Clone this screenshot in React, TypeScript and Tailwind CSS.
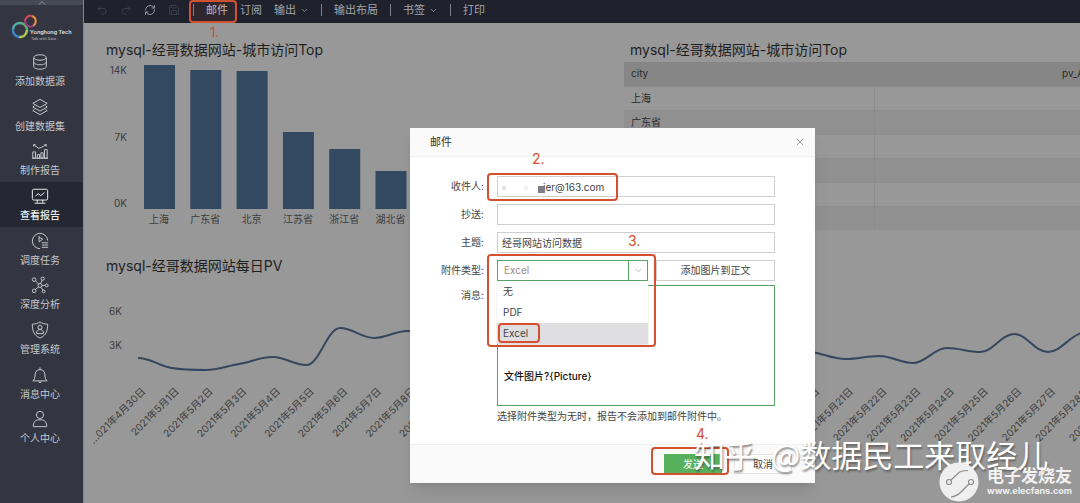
import React from 'react';
import { ChevronDown, ChevronUp, Redo2, RefreshCw, Save, Undo2, X } from 'lucide-react';

interface NavItem {
  label: string;
  icon: React.ReactNode;
  active?: boolean;
}

const navItems: NavItem[] = [
  {
    label: '添加数据源',
    icon: (
      <>
        <ellipse cx="10" cy="5" rx="7" ry="3" />
        <path d="M3 5v10c0 1.7 3.1 3 7 3s7-1.3 7-3V5M3 10c0 1.7 3.1 3 7 3s7-1.3 7-3" />
      </>
    ),
  },
  {
    label: '创建数据集',
    icon: <path d="M10 1.500l8 4.500-8 4.500L2 6zM2 10l8 4.500 8-4.500M2 14l8 4.500 8-4.500M4 8.500L2 10M16 8.500l2 1.500M4 12.500L2 14M16 12.500l2 1.500" />,
  },
  {
    label: '制作报告',
    icon: <path d="M2 18v-7h3v7zM7 18v-4h2.500v4zM11 18v-6h2.500v6zM15 18V8.500h3V18zM1 18h18M3 3l5.500 4 3-1L17 3M3 5V3h2M15 3h2v2" />,
  },
  {
    label: '查看报告',
    active: true,
    icon: <path d="M3 2.500h14a1.500 1.500 0 0 1 1.500 1.500v9a1.500 1.500 0 0 1-1.500 1.500H3A1.500 1.500 0 0 1 1.500 13V4A1.500 1.500 0 0 1 3 2.500zM5 10l3-2.500 3 2 4-3.500M7 14.500v3M13 14.500v3M4 18h12" />,
  },
  {
    label: '调度任务',
    icon: <path d="M18.500 9.500A8.500 8.500 0 1 0 10 18.500M9 4.500v6.500l4-3-4-2M12 12h7M12 14.500h7M12 17h7" />,
  },
  {
    label: '深度分析',
    icon: (
      <>
        <circle cx="10" cy="10.500" r="2.200" />
        <circle cx="3.500" cy="4" r="2" />
        <circle cx="13" cy="3" r="1.800" />
        <circle cx="17.500" cy="10.500" r="1.600" />
        <circle cx="3.500" cy="16.500" r="2" />
        <circle cx="14" cy="17" r="1.600" />
        <path d="M8.500 9L5 5.500M10.700 8.500l1.600-3.700M12.200 10.500h3.700M8.500 12L5 15M11 12.500l2.300 3.200" />
      </>
    ),
  },
  {
    label: '管理系统',
    icon: (
      <>
        <path d="M10 1c2.500 1.800 5.500 2.500 8.500 2.500 0 7.500-1.500 12.500-8.500 15.500C3 16 1.500 11 1.500 3.500 4.500 3.500 7.500 2.800 10 1z" />
        <circle cx="10" cy="7" r="2.300" />
        <path d="M6 14c0-6 8-6 8 0z" />
      </>
    ),
  },
  {
    label: '消息中心',
    icon: <path d="M2 16.500h16c-1.800-1.300-2.500-3-2.500-6.500 0-3.500-2-6-5.500-6S4.500 6.500 4.500 10c0 3.500-.7 5.200-2.500 6.500zM10 4V1.500M8.500 17c0 2 3 2 3 0" />,
  },
  {
    label: '个人中心',
    icon: (
      <>
        <circle cx="10" cy="5.500" r="4" />
        <path d="M2.500 18.500c0-4.500 2-7.500 5.500-7.500h4c3.500 0 5.500 3 5.500 7.500z" />
      </>
    ),
  },
];

const bars = [
  { city: '上海', height: 144 },
  { city: '广东省', height: 139 },
  { city: '北京', height: 138 },
  { city: '江苏省', height: 77 },
  { city: '浙江省', height: 60 },
  { city: '湖北省', height: 38 },
];

// y of each day on the daily PV chart, 30 April first
const pvPoints = [
  72, 82, 84, 78, 71, 79, 42, 52, 45, 50, 56, 48, 60, 66, 58, 54, 62, 70, 64, 60,
  66, 73, 70, 77, 62, 66, 48, 66, 47, 44,
];

const pvPath = pvPoints
  .map((y, i) => {
    const x = 54 + i * 33.7;
    if (i === 0) return `M${x} ${y}`;
    const before = pvPoints[Math.max(i - 2, 0)];
    const prev = pvPoints[i - 1];
    const next = pvPoints[Math.min(i + 1, pvPoints.length - 1)];
    // flat tangent at each peak and trough keeps the curve from overshooting
    const s1 = (prev - before) * (y - prev) > 0 ? (y - before) / 6 : 0;
    const s2 = (y - prev) * (next - y) > 0 ? (next - prev) / 6 : 0;
    return `C${x - 21} ${prev + s1} ${x - 13} ${y - s2} ${x} ${y}`;
  })
  .join(' ');

const days = ['…021年4月30日'].concat(
  Array.from({ length: 29 }, (_, i) => `2021年5月${i + 1}日`)
);

const cities = ['上海', '广东省', '', '', '', ''];

const Sidebar: React.FC = () => (
  <aside className="flex w-[83px] shrink-0 flex-col bg-[#333641] text-[#c5c7cc]">
    <div className="flex h-[5px] items-center justify-center overflow-hidden bg-[#464956]">
      <ChevronUp size={12} className="shrink-0 text-[#8b8d96]" />
    </div>
    <div className="flex h-[43px] items-center pl-[11px] pt-1">
      <svg width="66" height="30" viewBox="0 0 66 30" fill="none" aria-label="Yonghong Tech">
        <g strokeWidth="2.500">
          <path d="M2 15a7 7 0 0 1 7-6" stroke="#4fb0b5" />
          <path d="M2 15a7 7 0 0 0 6 8" stroke="#3b86c8" />
          <path d="M8 23a7 7 0 0 0 8-7" stroke="#a6c957" />
          <path d="M16 16a7 7 0 0 0-7-7" stroke="#5fae6b" />
        </g>
        <g strokeWidth="2">
          <path d="M14 7a5.500 5.500 0 0 1 7-5" stroke="#d8465c" />
          <path d="M21 2a5.500 5.500 0 0 1 1 10" stroke="#e58a3e" />
          <path d="M22 12a5.500 5.500 0 0 1-8-5" stroke="#9a3f86" />
        </g>
        <text x="19" y="20" fontSize="6" fontWeight="500" fontFamily="Roboto" fill="#e2e3e6">Yonghong Tech</text>
        <text x="20" y="26" fontSize="4" fontFamily="Roboto" fill="#b4b6bc">Talk with Data</text>
      </svg>
    </div>
    <nav className="flex h-[402px] flex-col">
      {navItems.map((item) => (
        <a
          key={item.label}
          href="#"
          className={`flex flex-1 flex-col items-center justify-center pr-[3px] ${
            item.active ? 'bg-[#252832] font-medium text-[#eeeeee]' : ''
          }`}
        >
          <svg width="18" height="18" viewBox="0 0 20 20" fill="none" stroke="currentColor" strokeWidth="1.100">
            {item.icon}
          </svg>
          <span className="mt-[3px] text-[10px] leading-[14px]">{item.label}</span>
        </a>
      ))}
    </nav>
  </aside>
);

const Separator: React.FC = () => <span className="h-3 w-px bg-[#80828a]" />;

const Toolbar: React.FC = () => (
  <header className="flex h-[23px] items-center bg-[#1f222d] pb-[3px] pl-3 text-[11px] text-[#a3a5aa]">
    <div className="flex items-center gap-3 text-[#42454f]">
      <button aria-label="撤销"><Undo2 size={12} strokeWidth={1.5} /></button>
      <button aria-label="重做"><Redo2 size={12} strokeWidth={1.5} /></button>
      <button aria-label="刷新" className="text-[#94969b]"><RefreshCw size={12} strokeWidth={2} /></button>
      <button aria-label="保存"><Save size={12} strokeWidth={1.5} /></button>
    </div>
    <div className="ml-[13px] flex items-center gap-3">
      <Separator />
      <div className="relative">
        <button className="text-[#c0c1c5]">邮件</button>
        <span className="absolute -left-[17px] -top-[2px] h-[23px] w-12 rounded border-2 border-[#cf5333] bg-[#cf5333]/10" />
        <span className="absolute left-1 top-[22px] text-[13px] leading-4 text-[#c4513d]">1.</span>
      </div>
      <button>订阅</button>
      <button className="flex items-center gap-1">输出<ChevronDown size={9} /></button>
      <Separator />
      <button>输出布局</button>
      <Separator />
      <button className="flex items-center gap-1">书签<ChevronDown size={9} /></button>
      <Separator />
      <button>打印</button>
    </div>
  </header>
);

const BarChart: React.FC = () => (
  <section className="w-[540px] shrink-0">
    <h2 className="pl-[22px] text-[14px] leading-5 text-[#1f1f1f]">mysql-经哥数据网站-城市访问Top</h2>
    <svg width="540" height="176" fontSize="10" fill="#3c3c3c">
      <text x="43" y="14" textAnchor="end">14K</text>
      <text x="43" y="81" textAnchor="end">7K</text>
      <text x="43" y="147" textAnchor="end">0K</text>
      {bars.map((bar, i) => (
        <g key={bar.city}>
          <rect x={60 + i * 46.3} y={149 - bar.height} width="31" height={bar.height} fill="#334861" />
          <text x={75 + i * 46.3} y="163" textAnchor="middle">{bar.city}</text>
        </g>
      ))}
    </svg>
  </section>
);

const CityTable: React.FC = () => (
  <section className="min-w-0 flex-1 overflow-hidden text-[#2b2b2b]">
    <h2 className="pl-[6px] text-[14px] leading-5 text-[#1f1f1f]">mysql-经哥数据网站-城市访问Top</h2>
    <table className="mt-[2px] w-[500px] table-fixed border-collapse text-[10px]">
      <thead>
        <tr className="h-6 bg-[#868686] text-left">
          <th className="pl-[7px] font-normal">city</th>
          <th className="pl-[188px] font-normal">pv_A</th>
        </tr>
      </thead>
      <tbody>
        {cities.map((city, i) => (
          <tr key={i} className="h-6 border-t border-[#8c8c8c] even:bg-[#909090]">
            <td className="border-r border-[#8c8c8c] pl-[7px]">{city}</td>
            <td />
          </tr>
        ))}
      </tbody>
    </table>
  </section>
);

const LineChart: React.FC = () => (
  <section className="overflow-hidden">
    <h2 className="pl-[22px] text-[14px] leading-5 text-[#1f1f1f]">mysql-经哥数据网站每日PV</h2>
    <svg width="1060" height="200" viewBox="0 -10 1060 200" fontSize="10" fill="#3c3c3c">
      <text x="38" y="29" textAnchor="end">6K</text>
      <text x="38" y="63" textAnchor="end">3K</text>
      <path d={pvPath} fill="none" stroke="#35475f" strokeWidth="2" />
      {days.map((day, i) => {
        const x = 62 + i * 33.7;
        return (
          <text key={day} x={x} y="106" textAnchor="end" transform={`rotate(-45 ${x} 106)`}>
            {day}
          </text>
        );
      })}
    </svg>
  </section>
);

const fieldLabel = 'w-[75px] shrink-0 pr-[1px] text-right leading-[21px]';
const fieldInput = 'h-[21px] w-full border border-[#cfcfcf] bg-white px-1 outline-none';

const MailDialog: React.FC = () => (
  <div role="dialog" aria-label="邮件" className="w-[405px] bg-white text-[10px] text-[#444444] shadow-lg">
    <div className="flex h-[29px] items-center justify-between border-b border-[#f0f0f0] bg-[#fafafa] pl-5 pr-[9px]">
      <h3 className="text-[11px] text-[#333333]">邮件</h3>
      <button aria-label="关闭" className="text-[#8a8a8a]"><X size={12} strokeWidth={1.5} /></button>
    </div>

    <form className="flex flex-col gap-[7px] pb-5 pr-10 pt-[19px]">
      <div className="flex gap-3">
        <label htmlFor="to" className={fieldLabel}>收件人:</label>
        <div className="relative flex-1">
          <input id="to" defaultValue="ier@163.com" className="h-[21px] w-full border border-[#cfcfcf] bg-white pl-[45px] outline-none" />
          <span className="absolute left-[41px] top-[10px] h-[7px] w-[7px] bg-[#7c7d87]" />
          <span className="absolute left-[5px] top-[10px] h-1 w-1 bg-[#e4e4e6]" />
          <span className="absolute left-[27px] top-[10px] h-1 w-1 bg-[#f0f0f0]" />
          <span className="absolute -left-[10px] -top-[3px] h-7 w-[131px] rounded border-2 border-[#d4502e]" />
          <span className="absolute left-[35px] -top-[26px] text-[14px] leading-[18px] text-[#d4502e]">2.</span>
        </div>
      </div>
      <div className="flex gap-3">
        <label htmlFor="cc" className={fieldLabel}>抄送:</label>
        <input id="cc" className={fieldInput} />
      </div>
      <div className="flex gap-3">
        <label htmlFor="subject" className={fieldLabel}>主题:</label>
        <input id="subject" defaultValue="经哥网站访问数据" className={fieldInput} />
      </div>
      <div className="flex gap-3">
        <label htmlFor="type" className={fieldLabel}>附件类型:</label>
        <div className="relative flex flex-1 gap-2">
          <div className="relative w-[151px]">
            <select
              id="type"
              defaultValue="Excel"
              className="h-[21px] w-full appearance-none border border-[#5aa565] bg-white pl-[6px] text-[#a08c80] outline-none"
            >
              <option>无</option>
              <option>PDF</option>
              <option>Excel</option>
            </select>
            <span className="pointer-events-none absolute right-0 top-0 flex h-[21px] w-5 items-center justify-center border-l border-[#5aa565] text-[#888888]">
              <ChevronDown size={9} strokeWidth={1.5} />
            </span>
            <ul role="listbox" className="absolute left-0 top-[21px] z-10 w-full bg-white leading-[21px] shadow-sm">
              <li role="option" aria-selected="false" className="pl-[6px]">无</li>
              <li role="option" aria-selected="false" className="pl-[6px]">PDF</li>
              <li role="option" aria-selected="true" className="relative bg-[#dfdfe2] pl-[6px]">
                Excel
                <span className="absolute left-[1px] top-0 h-5 w-[42px] rounded border-2 border-[#d4502e]" />
              </li>
            </ul>
          </div>
          <button type="button" className="h-[21px] flex-1 border border-[#cfcfcf] bg-white">添加图片到正文</button>
          <span className="absolute -left-[10px] -top-[6px] z-20 h-[93px] w-[169px] rounded border-2 border-[#d4502e]" />
          <span className="absolute left-[131px] -top-7 text-[14px] leading-[18px] text-[#d4502e]">3.</span>
        </div>
      </div>
      <div className="-mt-[3px] flex gap-3">
        <label htmlFor="message" className={fieldLabel}>消息:</label>
        <div className="flex-1">
          <textarea
            id="message"
            defaultValue={'\n\n\n\n文件图片?{Picture}'}
            className="block h-[121px] w-full resize-none border border-[#5aa565] px-[6px] font-medium leading-5 text-[#111111] outline-none"
          />
          <p className="mt-[3px] whitespace-nowrap leading-[15px]">选择附件类型为无时，报告不会添加到邮件附件中。</p>
        </div>
      </div>
    </form>

    <div className="flex h-[39px] items-center justify-end gap-3 border-t border-[#f0f0f0] bg-[#fafafa] pr-[23px]">
      <div className="relative">
        <button className="h-5 w-[58px] bg-[#57b05c] text-white">发送</button>
        <span className="absolute -left-[13px] -top-[7px] h-7 w-[78px] rounded border-2 border-[#d4502e]" />
        <span className="absolute left-8 -top-[29px] text-[14px] leading-[18px] text-[#d4502e]">4.</span>
      </div>
      <button className="h-5 w-[58px] border border-[#e2e2e2] bg-white">取消</button>
    </div>
  </div>
);

const Watermarks: React.FC = () => (
  <div className="pointer-events-none absolute inset-0 z-30 overflow-hidden text-white">
    <p className="absolute left-[694px] top-[433px] flex gap-[15px] whitespace-nowrap font-['Noto_Sans_CJK_SC',sans-serif] text-[31px] leading-[42px] [text-shadow:1px_2px_2px_rgba(60,60,60,0.6)]">
      <span>知乎</span>
      <span>@数据民工来取经儿</span>
    </p>
    <div className="absolute left-[939px] top-[462px] flex items-center gap-2">
      <svg width="40" height="40" viewBox="0 0 40 40" fill="none" stroke="#8c8c8c" strokeWidth="1.200">
        <circle cx="20" cy="20" r="19.500" fill="#efefef" stroke="none" />
        <circle cx="10" cy="20" r="2.500" />
        <circle cx="32" cy="20" r="2.500" />
        <path d="M12 18l8-7.500c2-1.500 5-2 9-2M30 22l-8 8c-2 2-5 4.500-10 5" />
      </svg>
      <div className="font-bold text-[#f0f0f0]">
        <p className="text-[17px] leading-[18px]">电子发烧友</p>
        <p className="text-[9px] leading-3">www.elecfans.com</p>
      </div>
    </div>
  </div>
);

export default function App() {
  return (
    <div className="relative flex h-screen overflow-hidden bg-[#989898] font-['Inter','Noto_Sans_CJK_SC',sans-serif]">
      <Sidebar />
      <main className="flex min-w-0 flex-1 flex-col border-l border-[#858791]">
        <Toolbar />
        <div className="flex pt-[17px]">
          <BarChart />
          <CityTable />
        </div>
        <div className="mt-5">
          <LineChart />
        </div>
      </main>
      <div className="absolute left-[410px] top-32 z-20">
        <MailDialog />
      </div>
      <Watermarks />
    </div>
  );
}
